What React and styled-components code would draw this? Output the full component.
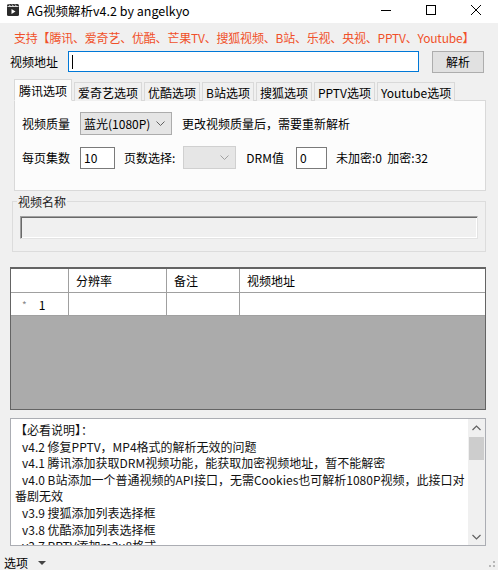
import styled, { createGlobalStyle } from "styled-components";

const Global = createGlobalStyle`
  html, body {
    margin: 0;
    padding: 0;
    background: #f0f0f0;
  }
  body {
    font-family: "Noto Sans CJK SC", "Noto Sans", sans-serif;
    font-size: 12px;
    color: #000;
  }
`;

const tabs = ["腾讯选项", "爱奇艺选项", "优酷选项", "B站选项", "搜狐选项", "PPTV选项", "Youtube选项"];

const notes = [
  { text: "【必看说明】：", indent: 1 },
  { text: "v4.2 修复PPTV，MP4格式的解析无效的问题", indent: 8 },
  { text: "v4.1 腾讯添加获取DRM视频功能，能获取加密视频地址，暂不能解密", indent: 8 },
  { text: "v4.0 B站添加一个普通视频的API接口，无需Cookies也可解析1080P视频，此接口对", indent: 8 },
  { text: "番剧无效", indent: 1 },
  { text: "v3.9 搜狐添加列表选择框", indent: 8 },
  { text: "v3.8 优酷添加列表选择框", indent: 8 },
  { text: "v3.7 PPTV添加m3u8格式", indent: 8 },
];

const Chevron = ({ color = "#606060" }) => (
  <svg width="9" height="6" viewBox="0 0 9 6">
    <path d="M0.5 0.5 L4.5 4.5 L8.5 0.5" fill="none" stroke={color} strokeWidth="1" />
  </svg>
);

const App = () => {
  return (
    <Window>
      <Global />
      <TitleBar>
        <AppIcon>
          <svg width="14" height="14" viewBox="0 0 14 14">
            <rect x="1" y="1" width="12" height="12" rx="1.5" fill="#2b2b2b" />
            <path d="M1.5 3.5 H12.5" stroke="#fff" strokeWidth="0.8" />
            <path d="M3 1.5 L4.5 3.3 M6 1.5 L7.5 3.3 M9 1.5 L10.5 3.3" stroke="#fff" strokeWidth="0.9" />
            <path d="M5.5 6 L9.5 8.5 L5.5 11 Z" fill="#fff" />
          </svg>
        </AppIcon>
        <Title>AG视频解析v4.2 by angelkyo</Title>
        <Controls>
          <Control>
            <svg width="10" height="10" viewBox="0 0 10 10">
              <path d="M0 5.5 H10" stroke="#000" strokeWidth="1" />
            </svg>
          </Control>
          <Control>
            <svg width="10" height="10" viewBox="0 0 10 10">
              <rect x="0.5" y="0.5" width="9" height="9" fill="none" stroke="#000" strokeWidth="1" />
            </svg>
          </Control>
          <Control>
            <svg width="10" height="10" viewBox="0 0 10 10">
              <path d="M0 0 L10 10 M10 0 L0 10" stroke="#000" strokeWidth="1" />
            </svg>
          </Control>
        </Controls>
      </TitleBar>

      <Body>
        <Support>支持【腾讯、爱奇艺、优酷、芒果TV、搜狐视频、B站、乐视、央视、PPTV、Youtube】</Support>

        <UrlRow>
          <Label>视频地址</Label>
          <UrlInput>
            <Caret />
          </UrlInput>
          <Button>解析</Button>
        </UrlRow>

        <TabStrip>
          {tabs.map((t, i) => (
            <Tab key={t} active={i === 0}>
              {t}
            </Tab>
          ))}
        </TabStrip>
        <TabPanel>
          <PanelRow>
            <Label>视频质量</Label>
            <Combo width={92} lead={10}>
              <span>蓝光(1080P)</span>
              <Chevron />
            </Combo>
            <Label lead={10}>更改视频质量后，需要重新解析</Label>
          </PanelRow>
          <PanelRow>
            <Label>每页集数</Label>
            <SmallInput width={35} lead={10}>10</SmallInput>
            <Label lead={9}>页数选择:</Label>
            <Combo width={53} lead={8} disabled>
              <span />
              <Chevron color="#a0a0a0" />
            </Combo>
            <Label lead={10}>DRM值</Label>
            <SmallInput width={31} lead={12}>0</SmallInput>
            <Label lead={9}>未加密:0&nbsp;&nbsp;加密:32</Label>
          </PanelRow>
        </TabPanel>

        <GroupBox>
          <GroupLegend>视频名称</GroupLegend>
          <NameBox />
        </GroupBox>

        <Grid>
          <GridHeader>
            <Cell width={57} />
            <Cell width={98}>分辨率</Cell>
            <Cell width={73}>备注</Cell>
            <Cell grow>视频地址</Cell>
          </GridHeader>
          <GridRow>
            <RowHead width={57}>
              <Star>*</Star>1
            </RowHead>
            <Cell width={98} />
            <Cell width={73} />
            <Cell grow />
          </GridRow>
        </Grid>

        <Notes>
          <NotesText>
            {notes.map((n, i) => (
              <NoteLine key={i} indent={n.indent}>
                {n.text}
              </NoteLine>
            ))}
          </NotesText>
          <ScrollBar>
            <ScrollArrow>
              <svg width="9" height="6" viewBox="0 0 9 6">
                <path d="M0.5 5 L4.5 1 L8.5 5" fill="none" stroke="#606060" strokeWidth="1.2" />
              </svg>
            </ScrollArrow>
            <Track>
              <Thumb />
            </Track>
            <ScrollArrow>
              <svg width="9" height="6" viewBox="0 0 9 6">
                <path d="M0.5 1 L4.5 5 L8.5 1" fill="none" stroke="#606060" strokeWidth="1.2" />
              </svg>
            </ScrollArrow>
          </ScrollBar>
        </Notes>
      </Body>

      <StatusBar>
        <StatusDrop>
          选项
          <svg width="8" height="4" viewBox="0 0 8 4">
            <path d="M0 0 H8 L4 4 Z" fill="#444" />
          </svg>
        </StatusDrop>
        <Grip>
          <svg width="10" height="10" viewBox="0 0 10 10">
            <rect x="7" y="3" width="2" height="2" fill="#b8b8b8" />
            <rect x="7" y="7" width="2" height="2" fill="#b8b8b8" />
            <rect x="3" y="7" width="2" height="2" fill="#b8b8b8" />
          </svg>
        </Grip>
      </StatusBar>
    </Window>
  );
};

export default App;

const Window = styled.div`
  width: 498px;
  height: 570px;
  display: flex;
  flex-direction: column;
  background: #f0f0f0;
  overflow: hidden;
`;

const TitleBar = styled.div`
  height: 23px;
  box-sizing: border-box;
  padding: 0 0 3px 6px;
  background: #fff;
  display: flex;
  align-items: center;
  flex: none;
`;

const AppIcon = styled.div`
  width: 14px;
  height: 14px;
  display: flex;
`;

const Title = styled.div`
  margin-left: 7px;
  font-size: 12.5px;
  color: #000;
  flex: 1;
`;

const Controls = styled.div`
  display: flex;
  height: 100%;
`;

const Control = styled.div`
  width: 45px;
  height: 100%;
  display: flex;
  align-items: center;
  justify-content: center;
`;

const Body = styled.div`
  display: flex;
  flex-direction: column;
  padding: 0 11px 0 10px;
  flex: none;
`;

const Support = styled.div`
  color: #f0502a;
  margin-top: 7px;
  padding-left: 4px;
  height: 16px;
  line-height: 16px;
  letter-spacing: -0.2px;
  white-space: nowrap;
`;

const UrlRow = styled.div`
  display: flex;
  align-items: center;
  margin-top: 4px;
  height: 23px;
`;

const Label = styled.span`
  white-space: nowrap;
  margin-left: ${(p) => p.lead || 0}px;
`;

const UrlInput = styled.div`
  margin-left: 10px;
  width: 346px;
  height: 19px;
  border: 1px solid #0078d7;
  background: #fff;
  display: flex;
  align-items: center;
  padding-left: 3px;
`;

const Caret = styled.div`
  width: 1px;
  height: 14px;
  background: #000;
`;

const Button = styled.div`
  margin-left: 13px;
  width: 50px;
  height: 20px;
  border: 1px solid #adadad;
  background: #e1e1e1;
  display: flex;
  align-items: center;
  justify-content: center;
`;

const TabStrip = styled.div`
  display: flex;
  align-items: flex-end;
  margin-top: 6px;
  padding-left: 4px;
  height: 22px;
  position: relative;
  z-index: 1;
`;

const Tab = styled.div`
  height: ${(p) => (p.active ? "22px" : "19px")};
  padding: 0 ${(p) => (p.active ? "4px" : "3px")};
  border: 1px solid #d9d9d9;
  border-bottom: ${(p) => (p.active ? "1px solid #fcfcfc" : "none")};
  background: ${(p) => (p.active ? "#fcfcfc" : "#f0f0f0")};
  display: flex;
  align-items: center;
  white-space: nowrap;
  margin-left: ${(p) => (p.active ? "0" : "2px")};
  position: relative;
  z-index: ${(p) => (p.active ? 2 : 1)};
  box-sizing: border-box;
`;

const TabPanel = styled.div`
  margin-left: 4px;
  margin-right: 1px;
  margin-top: -1px;
  height: 91px;
  border: 1px solid #d9d9d9;
  background: #fcfcfc;
  box-sizing: border-box;
  padding: 10px 0 0 7px;
  display: flex;
  flex-direction: column;
  gap: 9px;
`;

const PanelRow = styled.div`
  display: flex;
  align-items: center;
  height: 25px;
`;

const Combo = styled.div`
  width: ${(p) => p.width}px;
  height: 23px;
  box-sizing: border-box;
  border: 1px solid ${(p) => (p.disabled ? "#d0d0d0" : "#acacac")};
  background: ${(p) => (p.disabled ? "#e6e6e6" : "#e5e5e5")};
  display: flex;
  align-items: center;
  justify-content: space-between;
  padding: 0 6px 0 3px;
  margin-left: ${(p) => p.lead || 0}px;
`;

const SmallInput = styled.div`
  width: ${(p) => p.width}px;
  height: 22px;
  box-sizing: border-box;
  border: 1px solid #7a7a7a;
  background: #fff;
  display: flex;
  align-items: center;
  padding-left: 3px;
  margin-left: ${(p) => p.lead || 0}px;
`;

const GroupBox = styled.fieldset`
  margin: 2px 1px 0 2px;
  height: 59px;
  box-sizing: border-box;
  border: 1px solid #dcdcdc;
  padding: 2px 7px 0 7px;
`;

const GroupLegend = styled.legend`
  padding: 0 1px;
  margin-left: -3px;
  color: #222;
`;

const NameBox = styled.div`
  height: 23px;
  box-sizing: border-box;
  border: 1px solid #a0a0a0;
  border-right-color: #e3e3e3;
  border-bottom-color: #e3e3e3;
  box-shadow: inset 1px 1px 0 #696969, inset -1px -1px 0 #fff;
  background: #f0f0f0;
  margin-top: 4px;
`;

const Grid = styled.div`
  margin-top: 15px;
  margin-right: 1px;
  height: 143px;
  box-sizing: border-box;
  border: 1px solid #646464;
  border-top-width: 2px;
  background: #ababab;
  display: flex;
  flex-direction: column;
`;

const GridHeader = styled.div`
  display: flex;
  height: 23px;
  background: #fff;
  border-bottom: 1px solid #a0a0a0;
  padding-left: 1px;
`;

const GridRow = styled.div`
  display: flex;
  height: 22px;
  background: #fff;
  border-bottom: 1px solid #a0a0a0;
  padding-left: 1px;
`;

const Cell = styled.div`
  width: ${(p) => (p.width ? `${p.width}px` : "auto")};
  flex: ${(p) => (p.grow ? 1 : "none")};
  border-right: ${(p) => (p.grow ? "none" : "1px solid #a0a0a0")};
  display: flex;
  align-items: center;
  padding-left: 7px;
  box-sizing: border-box;
`;

const RowHead = styled(Cell)`
  padding-left: 10px;
  gap: 12px;
`;

const Star = styled.span`
  color: #888;
  font-size: 10px;
`;

const Notes = styled.div`
  margin-top: 8px;
  margin-right: 1px;
  height: 128px;
  box-sizing: border-box;
  border: 1px solid #abadb3;
  background: #fff;
  display: flex;
  overflow: hidden;
`;

const NotesText = styled.div`
  flex: 1;
  padding: 3px 0 0 3px;
  overflow: hidden;
`;

const NoteLine = styled.div`
  height: 16.6px;
  line-height: 16.6px;
  white-space: nowrap;
  padding-left: ${(p) => p.indent}px;
  color: #111;
`;

const ScrollBar = styled.div`
  width: 17px;
  background: #f0f0f0;
  display: flex;
  flex-direction: column;
`;

const ScrollArrow = styled.div`
  height: 17px;
  display: flex;
  align-items: center;
  justify-content: center;
`;

const Track = styled.div`
  flex: 1;
`;

const Thumb = styled.div`
  margin: 1px 1px 0 1px;
  height: 23px;
  background: #cdcdcd;
`;

const StatusBar = styled.div`
  flex: 1;
  display: flex;
  align-items: flex-end;
  justify-content: space-between;
  padding-left: 4px;
`;

const StatusDrop = styled.div`
  display: flex;
  align-items: center;
  gap: 10px;
  height: 15px;
  line-height: 15px;
  margin-bottom: 0;
`;

const Grip = styled.div`
  width: 10px;
  height: 10px;
  margin: 0 2px 2px 0;
  display: flex;
`;
